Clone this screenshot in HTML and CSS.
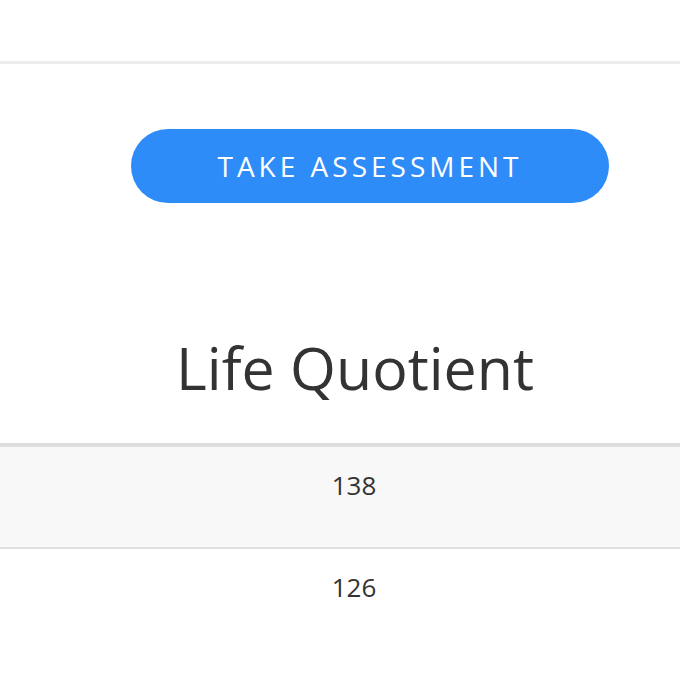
FILE: index.html
```html
<!DOCTYPE html>
<html lang="en">
<head>
<meta charset="utf-8">
<title>Life Quotient</title>
<link rel="stylesheet" href="styles.css">
</head>
<body>
<header class="topbar"></header>
<section class="cta-wrap">
  <a class="cta" href="#">TAKE ASSESSMENT</a>
</section>
<h1 class="title">Life Quotient</h1>
<div class="scores">
  <div class="score-row alt">138</div>
  <div class="score-row last">126</div>
</div>
</body>
</html>
```

FILE: styles.css
```css
html, body {
  margin: 0;
  padding: 0;
  background: #ffffff;
}
body {
  font-family: "Open Sans", "Noto Sans", sans-serif;
  color: #333333;
  width: 680px;
  height: 680px;
  overflow: hidden;
}
.topbar {
  height: 61px;
  border-bottom: 3px solid #ececec;
}
.cta-wrap {
  padding: 65px 0 0 131px;
}
.cta {
  display: flex;
  align-items: center;
  justify-content: center;
  width: 478px;
  height: 74px;
  border-radius: 37px;
  background: #2d8cf8;
  color: #ffffff;
  text-decoration: none;
  font-size: 28px;
  letter-spacing: 4px;
  padding-left: 0;
  box-sizing: border-box;
}
.title {
  margin: 129px 0 40px;
  padding-left: 30px;
  text-align: center;
  font-size: 59px;
  font-weight: 400;
  line-height: 1.2;
  color: #333333;
}
.scores {
  border-top: 4px solid #dedede;
}
.score-row {
  height: 102px;
  box-sizing: border-box;
  padding: 19px 0 0 28px;
  text-align: center;
  font-size: 26px;
  line-height: 39px;
  border-bottom: 2px solid #e0e0e0;
}
.score-row.alt {
  background: #f8f8f8;
}
.score-row.last {
  border-bottom: 0;
}
```
